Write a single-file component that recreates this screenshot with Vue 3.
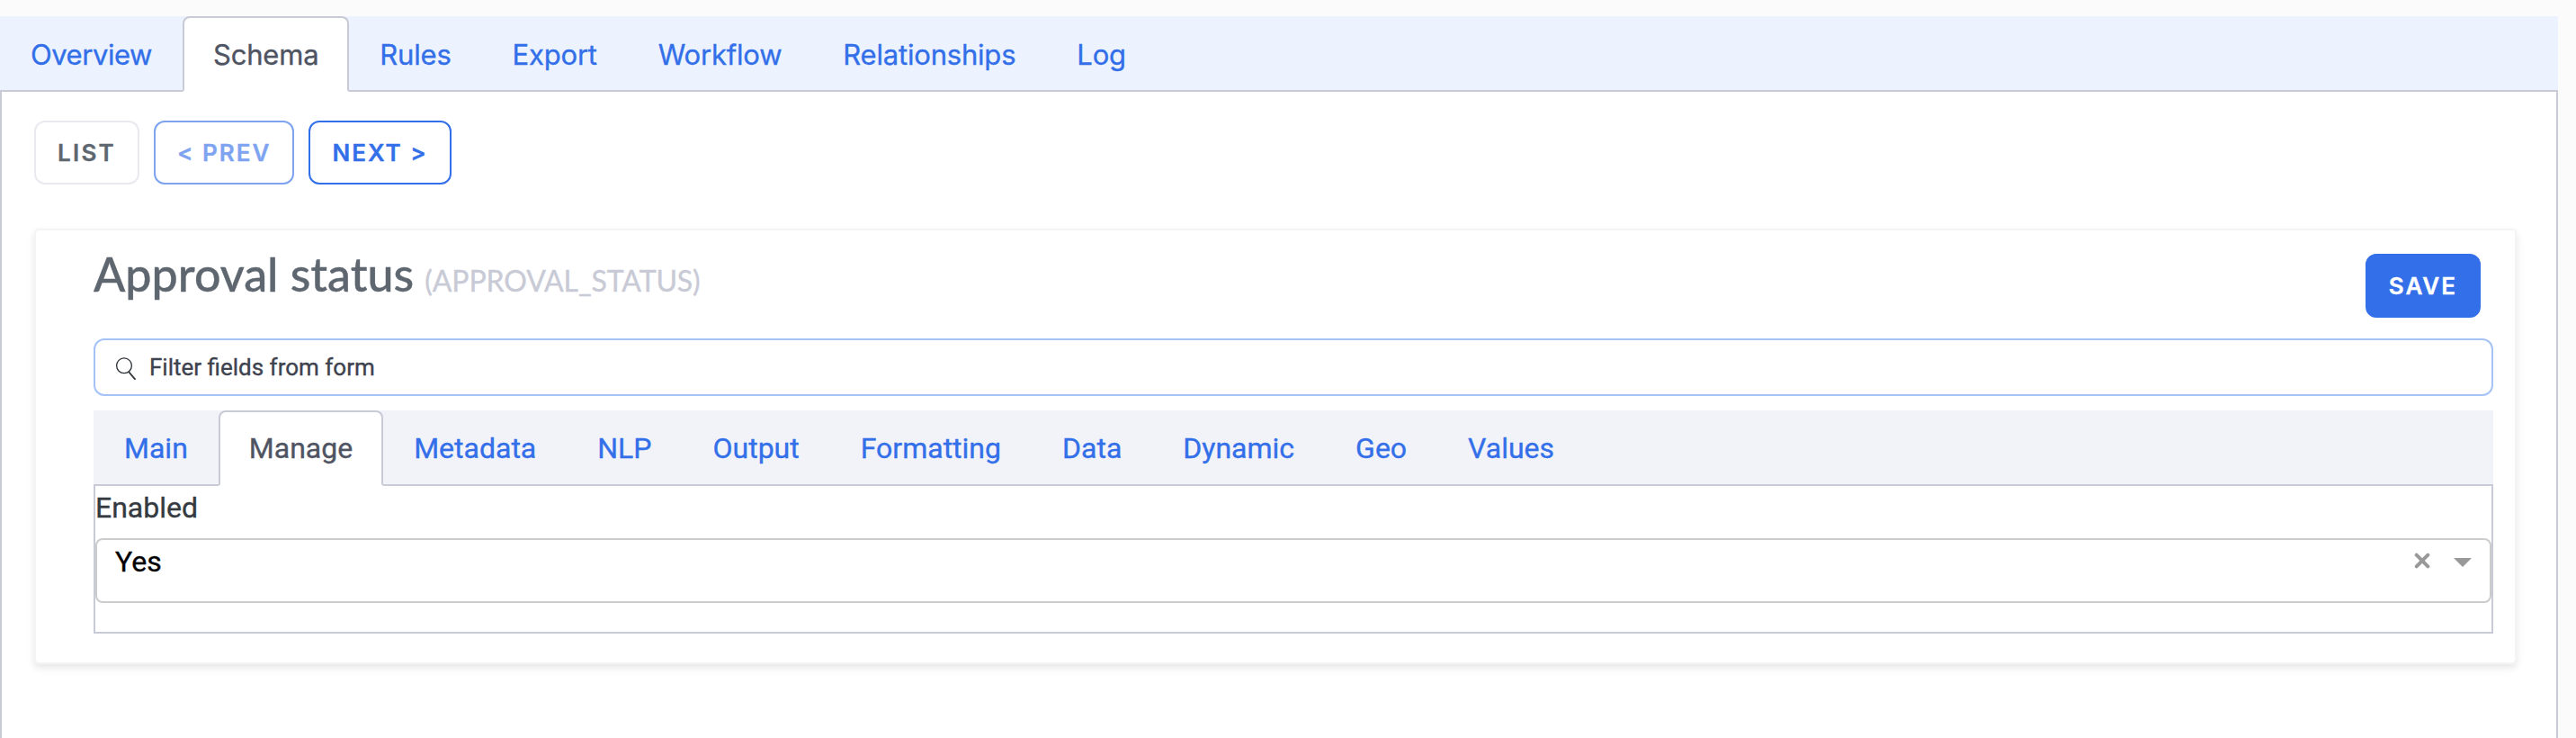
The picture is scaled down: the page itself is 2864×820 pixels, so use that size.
<script setup>
import { ref } from 'vue'

const pageTabs = ['Overview', 'Schema', 'Rules', 'Export', 'Workflow', 'Relationships', 'Log']
const formTabs = ['Main', 'Manage', 'Metadata', 'NLP', 'Output', 'Formatting', 'Data', 'Dynamic', 'Geo', 'Values']
const page = ref('Schema')
const section = ref('Manage')
</script>

<template>
  <div class="app">
    <nav class="tabs page-tabs">
      <a v-for="t in pageTabs" :key="t" class="tab" :class="{ active: t === page }" @click="page = t">{{ t }}</a>
    </nav>
    <main class="page">
      <div class="actions">
        <button class="btn light">LIST</button>
        <button class="btn outline" disabled>&lt; PREV</button>
        <button class="btn outline">NEXT &gt;</button>
      </div>
      <section class="card">
        <header class="head">
          <h1>Approval status <small>(APPROVAL_STATUS)</small></h1>
          <button class="btn primary">SAVE</button>
        </header>
        <label class="filter">
          <svg width="26" height="28" viewBox="0 0 26 28" fill="none" stroke="#2b2f36">
            <circle cx="10" cy="12.3" r="8.4" stroke-width="1.3" />
            <path d="M15 19l7.5 8.8" stroke-width="1.8" />
          </svg>
          <span>Filter fields from form</span>
        </label>
        <nav class="tabs form-tabs">
          <a v-for="t in formTabs" :key="t" class="tab" :class="{ active: t === section }" @click="section = t">{{ t }}</a>
        </nav>
        <div class="pane">
          <div class="label">Enabled</div>
          <div class="select">
            <span class="value">Yes</span>
            <svg class="clear" width="18" height="18" viewBox="0 0 18 18" stroke="#999" stroke-width="4" stroke-linecap="round">
              <path d="M2.7 2.7l12.6 12.6M15.3 2.7L2.7 15.3" />
            </svg>
            <svg class="arrow" width="20" height="10" viewBox="0 0 20 10" fill="#999"><path d="M0 0h20L10 10z" /></svg>
          </div>
        </div>
      </section>
    </main>
  </div>
</template>

<style>
body { background: #fbfbfb; }
</style>

<style scoped>
* { box-sizing: border-box; }
.app {
  width: 2844px;
  height: 820px;
  padding-top: 18px;
  display: flex;
  flex-direction: column;
  overflow: hidden;
  font-family: Roboto, sans-serif;
  font-size: 32px;
  line-height: 48px;
  -webkit-text-stroke: .35px currentColor;
}
.tabs { display: flex; height: 84px; border-bottom: 2px solid #c8cad6; flex: none; }
.page-tabs { background: #ecf3fe; font-family: Inter, sans-serif; font-size: 31px; letter-spacing: -.2px; }
.page-tabs .tab { padding-top: 17px; }
.page-tabs .tab:first-child { letter-spacing: -.45px; }
.form-tabs { background: #f2f3f8; margin-top: 16px; }
.tab {
  height: 84px;
  padding: 16px 32px;
  border: 2px solid transparent;
  border-radius: 8px 8px 0 0;
  color: #336fe9;
  white-space: nowrap;
}
.tab.active { color: #4f5463; background: #fff; border-color: #c8cad6 #c8cad6 #fff; }
.page { flex: 1; background: #fff; border: solid #c8cad6; border-width: 0 2px; padding: 32px 44px 0 36px; }
.actions { display: flex; gap: 16px; }
.btn {
  height: 71px;
  padding: 0 24px;
  border: 2px solid;
  border-radius: 12px;
  background: #fff;
  font: 600 26px/40px Inter, sans-serif;
  letter-spacing: 2px;
  white-space: nowrap;
}
.light { color: #5e666f; border-color: #e9eaef; letter-spacing: 2.25px; }
.outline { color: #336fe9; border-color: #336fe9; }
.outline:disabled { opacity: .63; }
.primary { color: #fff; background: #336fe9; border-color: #336fe9; }
.card {
  width: 2760px;
  height: 484px;
  margin-top: 49px;
  border: 2px solid #f4f4f4;
  border-radius: 5px;
  padding: 0 24px 0 64px;
  background: #fff;
  box-shadow: 0 4px 8px rgba(0, 0, 0, .1);
}
.head { display: flex; justify-content: space-between; height: 120px; padding: 0 14px 0 0; }
.head .btn { margin-top: 26px; }
h1 { margin: 16px 0 0; font: 500 52px/64px Lato, sans-serif; color: #5e666f; }
h1 small { margin-left: -1px; font-size: 32px; font-weight: 400; letter-spacing: -.1px; color: #c8cad6; }
.filter {
  display: flex;
  align-items: center;
  height: 64px;
  padding-left: 22px;
  border: 2px solid #a6c3f8;
  border-radius: 12px;
  color: #3e424e;
  font-size: 26px;
}
.filter span { margin-left: 12px; }
.pane { height: 164px; border: solid #c8cad6; border-width: 0 2px 2px; }
.label { height: 58px; color: #343a40; }
.select {
  display: flex;
  height: 72px;
  padding: 0 20px;
  border: 2px solid #ccc;
  border-radius: 8px;
  color: #000;
}
.value { flex: 1; }
.clear { margin: 14px 26px 0 0; }
.arrow { margin-top: 20px; }
</style>
